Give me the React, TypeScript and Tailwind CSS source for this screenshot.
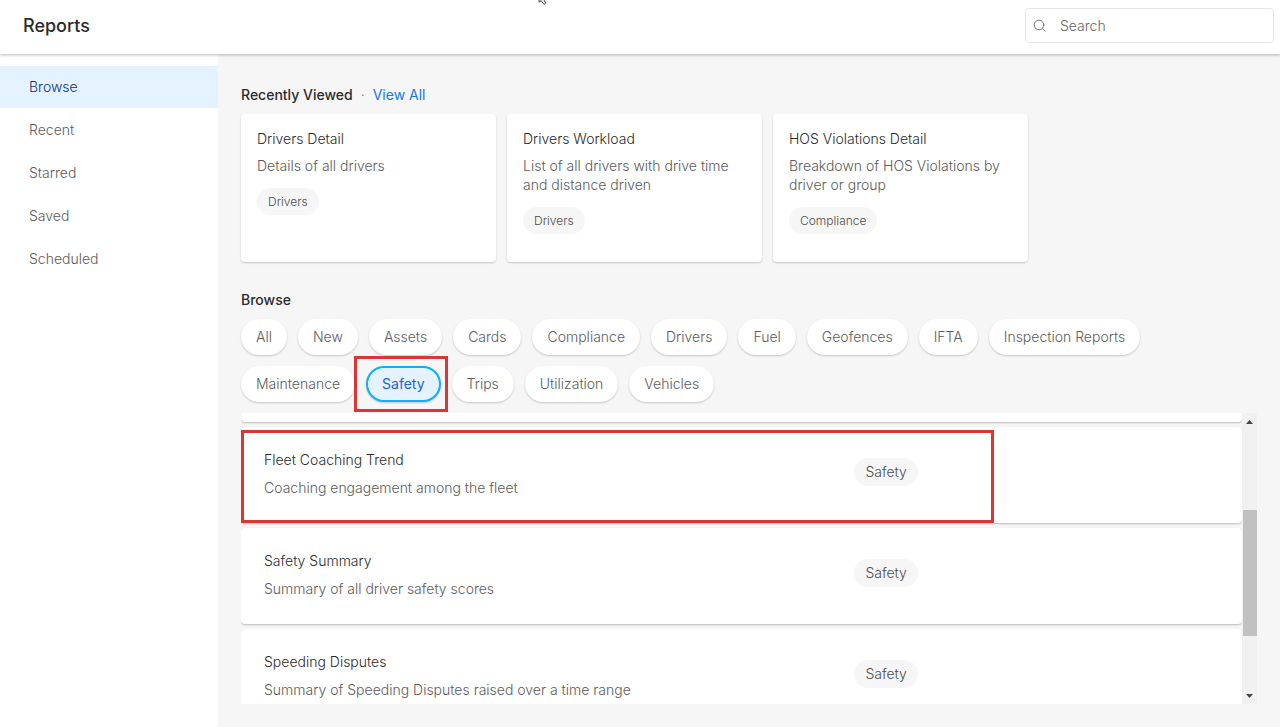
import React from "react";

const navItems = ["Browse", "Recent", "Starred", "Saved", "Scheduled"];

const recent = [
  { title: "Drivers Detail", text: "Details of all drivers", tag: "Drivers" },
  { title: "Drivers Workload", text: "List of all drivers with drive time and distance driven", tag: "Drivers" },
  { title: "HOS Violations Detail", text: "Breakdown of HOS Violations by driver or group", tag: "Compliance" },
];

const categories = [
  "All", "New", "Assets", "Cards", "Compliance", "Drivers", "Fuel", "Geofences",
  "IFTA", "Inspection Reports", "Maintenance", "Safety", "Trips", "Utilization", "Vehicles",
];

const reports = [
  { title: "Fleet Coaching Trend", text: "Coaching engagement among the fleet", marked: true },
  { title: "Safety Summary", text: "Summary of all driver safety scores", marked: false },
  { title: "Speeding Disputes", text: "Summary of Speeding Disputes raised over a time range", marked: false },
];

function Header() {
  return (
    <header className="relative z-10 flex h-[54px] shrink-0 items-center justify-between bg-white pr-[6px] pb-[3px] pl-[23px] shadow-[0_1px_3px_rgba(0,0,0,0.28)]">
      <h1 className="text-lg leading-6 font-medium text-[#2b2b2b]">Reports</h1>
      <label className="flex h-[35px] w-[249px] items-center rounded-[4px] border border-[#e6e6e6] bg-white pl-[7px]">
        <svg className="size-[14px] shrink-0" viewBox="0 0 14 14" fill="none" stroke="#777" strokeWidth="1" strokeLinecap="round" aria-hidden="true">
          <circle cx="6" cy="6" r="4.8" />
          <path d="M9.6 9.6 12.2 12.2" />
        </svg>
        <input
          type="search"
          aria-label="Search"
          placeholder="Search"
          className="ml-[13px] w-full min-w-0 bg-transparent text-sm text-[#666] outline-none placeholder:text-[#666]"
        />
      </label>
      <svg className="absolute top-0 left-[538px] h-[5px] w-[10px]" viewBox="0 0 10 5" fill="#fff" stroke="#444" strokeWidth="1" aria-hidden="true">
        <path d="M1 0V2.2L3.2 0.6 5.2 3.6Q6.6 4.6 7.8 3.2L6 0" />
      </svg>
    </header>
  );
}

function Sidebar() {
  return (
    <nav className="flex w-[218px] shrink-0 flex-col gap-px bg-white pt-3">
      {navItems.map((item, i) => (
        <a
          key={item}
          href="#"
          className={
            i === 0
              ? "flex h-[42px] items-center bg-[#e4f3ff] pl-[29px] text-sm text-[#102f88]"
              : "flex h-[42px] items-center pb-px pl-[29px] text-sm text-[#5c5c5c]"
          }
        >
          {item}
        </a>
      ))}
    </nav>
  );
}

function RecentCards() {
  return (
    <div className="mt-[9px] grid max-w-[787px] grid-cols-3 gap-[11px]">
      {recent.map((card) => (
        <article key={card.title} className="h-[148px] rounded-[4px] bg-white px-4 pt-[15px] shadow-[0_1px_2px_rgba(0,0,0,0.2)]">
          <h3 className="text-sm leading-5 text-[#2b2b2b]">{card.title}</h3>
          <p className="mt-[7px] text-sm leading-[19px] text-[#5c5c5c]">{card.text}</p>
          <span className="mt-[13px] inline-flex h-[27px] items-center rounded-full bg-[#f6f6f6] px-[11px] text-xs text-[#4c4c4c]">{card.tag}</span>
        </article>
      ))}
    </div>
  );
}

function Categories() {
  return (
    <div className="mt-[9px] flex max-w-[920px] flex-wrap gap-[11px]">
      {categories.map((name) =>
        name === "Safety" ? (
          <div key={name} className="relative">
            <button type="button" aria-pressed="true" className="h-9 rounded-full border-2 border-[#0fb0f8] bg-[#e4f3ff] px-[14px] text-sm font-normal text-[#1f62cc] shadow-[0_1px_2px_rgba(0,0,0,0.2)]">
              {name}
            </button>
            <span className="pointer-events-none absolute -top-[10px] -right-[7px] -bottom-[10px] -left-3 z-10 border-3 border-[#d93636]" />
          </div>
        ) : (
          <button key={name} type="button" className="h-9 rounded-full bg-white px-[15px] text-sm text-[#5c5c5c] shadow-[0_1px_2px_rgba(0,0,0,0.2)]">
            {name}
          </button>
        ),
      )}
    </div>
  );
}

function ReportList() {
  return (
    <div className="mt-[11px] flex min-h-0 flex-1">
      <ul className="flex min-w-0 flex-1 flex-col gap-[5px] overflow-hidden">
        <li className="h-[9px] shrink-0 rounded-b-[4px] bg-white shadow-[0_1px_2px_rgba(0,0,0,0.24)]" />
        {reports.map((r) => (
          <li key={r.title} className="relative grid h-24 shrink-0 grid-cols-[614fr_388fr] items-center rounded-[4px] bg-white shadow-[0_1px_2px_rgba(0,0,0,0.24)]">
            <div className="pb-[2px] pl-[23px]">
              <h3 className="text-sm leading-5 text-[#2b2b2b]">{r.title}</h3>
              <p className="mt-2 text-sm leading-5 text-[#5c5c5c]">{r.text}</p>
            </div>
            <div className="flex pb-[6px]">
              <span className="flex h-7 items-center rounded-full bg-[#f6f6f6] px-[11px] text-sm text-[#4c4c4c]">Safety</span>
            </div>
            {r.marked && <span className="pointer-events-none absolute top-[3px] right-[248px] bottom-0 left-0 border-3 border-[#d93636]" />}
          </li>
        ))}
      </ul>
      <div className="flex w-[15px] shrink-0 flex-col bg-[#f1f1f1]">
        <button type="button" aria-label="Scroll up" className="flex h-[17px] shrink-0 items-center justify-center">
          <svg className="h-1 w-[7px]" viewBox="0 0 7 4" fill="#444"><path d="M0 4 3.5 0 7 4Z" /></svg>
        </button>
        <div className="flex flex-1 flex-col">
          <div className="grow-80" />
          <div className="ml-px grow-126 bg-[#c1c1c1]" />
          <div className="grow-51" />
        </div>
        <button type="button" aria-label="Scroll down" className="flex h-[17px] shrink-0 items-center justify-center">
          <svg className="h-1 w-[7px]" viewBox="0 0 7 4" fill="#444"><path d="M0 0 3.5 4 7 0Z" /></svg>
        </button>
      </div>
    </div>
  );
}

export default function App() {
  return (
    <div className="flex h-screen flex-col bg-[#f6f6f6] font-['Inter',sans-serif] font-light">
      <Header />
      <div className="flex min-h-0 flex-1">
        <Sidebar />
        <main className="flex min-w-0 flex-1 flex-col pt-[31px] pr-[23px] pb-[23px] pl-[23px]">
          <div className="flex items-center text-sm leading-5">
            <h2 className="font-medium text-[#2b2b2b]">Recently Viewed</h2>
            <span className="mx-2 text-[#777]">·</span>
            <a href="#" className="font-normal text-[#1579e0]">View All</a>
          </div>
          <RecentCards />
          <h2 className="mt-7 text-sm leading-5 font-medium text-[#2b2b2b]">Browse</h2>
          <Categories />
          <ReportList />
        </main>
      </div>
    </div>
  );
}
